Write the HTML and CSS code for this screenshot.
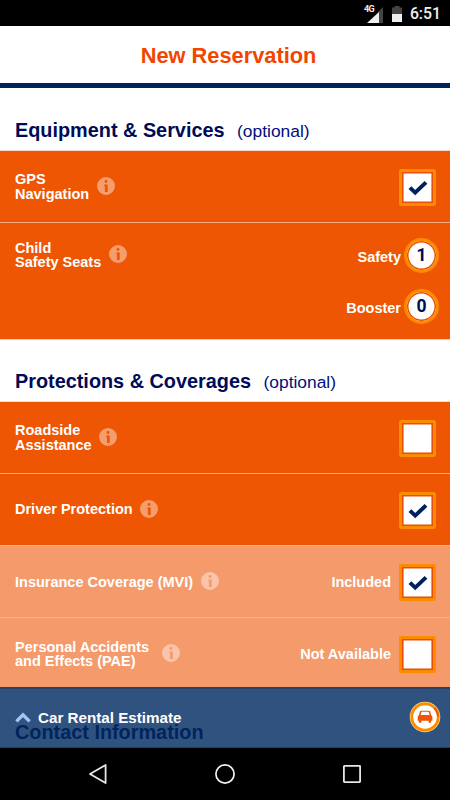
FILE: index.html
```html
<!DOCTYPE html>
<html lang="en">
<head>
<meta charset="utf-8">
<title>New Reservation</title>
<link rel="stylesheet" href="styles.css">
</head>
<body>
<svg class="defs" width="0" height="0">
  <symbol id="info" viewBox="0 0 18 18">
    <path fill="#fff" fill-opacity=".42" fill-rule="evenodd" d="M9 0a9 9 0 1 1 0 18A9 9 0 0 1 9 0zM9 3a1.45 1.45 0 1 0 0 2.9A1.45 1.45 0 0 0 9 3zM7.2 7.6v1.1h.7V15h2.8V7.6z"/>
  </symbol>
  <symbol id="check" viewBox="0 0 20 16">
    <path fill="none" stroke="#00205f" stroke-width="4" d="M1.9 7.6 7.2 12.6 18 2.4"/>
  </symbol>
</svg>
<div class="phone">
  <div class="status">
    <svg class="signal" width="16" height="18" viewBox="0 0 16 18">
      <path fill="#444" d="M16 1v16h-5V6z"/>
      <path fill="#eee" d="M12 6v11H0z"/>
    </svg>
    <span class="network">4G</span>
    <svg class="battery" width="10" height="16" viewBox="0 0 10 16">
      <path fill="#444" d="M2.5 0h5v1.5H10V8H0V1.5h2.5z"/>
      <path fill="#eee" d="M0 8h10v8H0z"/>
    </svg>
    <span class="clock">6:51</span>
  </div>
  <header class="header"><h1>New Reservation</h1></header>
  <main class="content">
    <h2 class="title">Equipment &amp; Services <span>(optional)</span></h2>
    <section>
      <div class="row">
        <div class="label">GPS<br>Navigation</div><svg class="info"><use href="#info"/></svg>
        <div class="box"><svg><use href="#check"/></svg></div>
      </div>
      <div class="row seats">
        <div class="label">Child<br>Safety Seats</div><svg class="info"><use href="#info"/></svg>
        <div class="counts">
          <div class="count">Safety <b>1</b></div>
          <div class="count">Booster <b>0</b></div>
        </div>
      </div>
    </section>
    <h2 class="title second">Protections &amp; Coverages <span>(optional)</span></h2>
    <section>
      <div class="row">
        <div class="label">Roadside<br>Assistance</div><svg class="info"><use href="#info"/></svg>
        <div class="box"></div>
      </div>
      <div class="row">
        <div class="label">Driver Protection</div><svg class="info"><use href="#info"/></svg>
        <div class="box"><svg><use href="#check"/></svg></div>
      </div>
      <div class="row disabled">
        <div class="label">Insurance Coverage (MVI)</div><svg class="info"><use href="#info"/></svg>
        <span class="note">Included</span>
        <div class="box"><svg><use href="#check"/></svg></div>
      </div>
      <div class="row disabled">
        <div class="label wide">Personal Accidents<br>and Effects (PAE)</div><svg class="info"><use href="#info"/></svg>
        <span class="note">Not Available</span>
        <div class="box"></div>
      </div>
    </section>
    <h2 class="title contact">Contact Information</h2>
    <div class="estimate">
      <svg class="chevron" width="16" height="11" viewBox="0 0 16 11"><path fill="none" stroke="#a4c5f5" stroke-width="3.4" d="M1.4 9.4 8 2.9l6.6 6.5"/></svg>
      <span>Car Rental Estimate</span>
      <svg class="car" width="32" height="32" viewBox="0 0 32 32">
        <circle cx="16" cy="16" r="15.3" fill="#ffd36b"/>
        <circle cx="16" cy="16" r="14.5" fill="#fb8c00"/>
        <path fill="none" stroke="#f05a0a" stroke-width="2.4" d="M25.4 7.2A13 13 0 0 1 29 15.5"/>
        <circle cx="16" cy="16" r="11.8" fill="#fff"/>
        <path fill="#ee5404" fill-rule="evenodd" d="M12 9.8h8.2q.8 0 1 .8l1 3.6q1.2.4 1.2 1.8v3.7h-1.3v2h-2.5v-2h-7.2v2H9.9v-2H8.7V16q0-1.4 1.2-1.8l1-3.6q.2-.8 1.1-.8zm.5 1-.9 3.2h9l-.9-3.2z"/>
      </svg>
    </div>
  </main>
  <nav class="nav">
    <svg width="18" height="20" viewBox="0 0 18 20"><path fill="none" stroke="#e6e6e6" stroke-width="1.8" stroke-linejoin="round" d="M16.6 1v18L1 10z"/></svg>
    <svg width="20" height="20" viewBox="0 0 20 20"><circle cx="10" cy="10" r="9.1" fill="none" stroke="#f2f2f2" stroke-width="1.7"/></svg>
    <svg width="18" height="18" viewBox="0 0 18 18"><rect x=".9" y=".9" width="16.2" height="16.2" fill="none" stroke="#e6e6e6" stroke-width="1.8" rx=".5"/></svg>
  </nav>
</div>
</body>
</html>
```

FILE: styles.css
```css
* { box-sizing: border-box; }
body { margin: 0; font-family: "Liberation Sans", Arial, sans-serif; }
svg { display: block; flex: none; }
.defs { position: absolute; }
.phone { width: 450px; height: 800px; display: flex; flex-direction: column; background: #fff; overflow: hidden; }
.status { height: 26px; flex: none; background: #000; position: relative; display: flex; align-items: center; justify-content: flex-end; padding-right: 9px; color: #f0f0f0; font-family: Roboto, sans-serif; }
.network { position: absolute; left: 364px; top: 4px; font-size: 9px; line-height: 10px; font-weight: 700; letter-spacing: -.6px; }
.signal { margin: 4px 9px 0 0; }
.battery { margin: 1px 8px 0 0; }
.clock { font-size: 15.8px; line-height: 26px; font-weight: 500; padding-top: 2px; }
.header { height: 62px; flex: none; border-bottom: 5px solid #00235c; }
h1 { margin: 0; font-size: 21.8px; line-height: 59px; text-align: center; color: #f04600; padding-left: 7px; }
.content { flex: 1; min-height: 0; position: relative; overflow: hidden; }
.title { margin: 0; height: 62px; padding: 30px 15px 0; font-size: 19.85px; line-height: 24px; color: #000b57; white-space: nowrap; }
.title span { font-size: 17.4px; font-weight: 400; margin-left: 7px; color: #000f7c; }
.row { height: 72px; display: flex; align-items: center; padding: 0 14px 0 15px; background: #ee5604; border-top: 1px solid #f8ab83; color: #fff; font-size: 14.5px; line-height: 14.4px; font-weight: 700; }
.row:first-child { border-top-color: #fcd9c5; }
.info { width: 18px; height: 18px; margin: 0 0 1px 7.5px; }
.label { white-space: nowrap; }
.wide { width: 140px; }
.wide + .info { margin-left: 6.5px; }
.box { width: 37px; height: 37px; flex: none; margin: 2px 0 0 auto; border: 3px solid #fb8c00; border-radius: 2.5px; background: #fff; box-shadow: inset 0 0 0 1.6px #ee4c0c; display: flex; align-items: center; justify-content: center; }
.box svg { width: 20px; height: 16px; }
.note { margin-left: auto; }
.note + .box { margin-left: 8px; }
.seats { height: 117px; align-items: flex-start; padding: 18px 11px 0 15px; }
.seats .info { margin-top: 4px; }
.counts { margin-left: auto; display: flex; flex-direction: column; align-items: flex-end; gap: 16px; margin-top: -3px; }
.count { display: flex; align-items: center; gap: 3px; height: 35px; line-height: 18px; padding-top: 3px; }
.count b { width: 35px; height: 35px; flex: none; margin-top: -3px; border: 3px solid #fb8c00; border-radius: 50%; background: #fff; box-shadow: inset 0 0 0 1.5px #ee4c0c; color: #000b57; text-align: center; font: 700 17.5px/28px Roboto, sans-serif; }
.second { border-top: 1px solid #fbc9ae; padding-top: 29px; }
.disabled { background: #f59a6b; border-top-color: #f8b08b; }
.disabled .label, .note { padding-top: 1px; }
.contact { height: 60px; padding-top: 31px; }
.estimate { position: absolute; left: 0; right: 0; bottom: 0; height: 61px; background: rgba(0, 42, 96, .81); border-bottom: 1px solid #203c66; display: flex; align-items: center; padding: 0 9px 0 15px; color: #fff; font-size: 15.2px; font-weight: 700; }
.chevron { margin-right: 7px; }
.car { margin-left: auto; }
.nav { height: 52px; flex: none; background: #000; display: flex; align-items: center; justify-content: center; gap: 108px; }
```
